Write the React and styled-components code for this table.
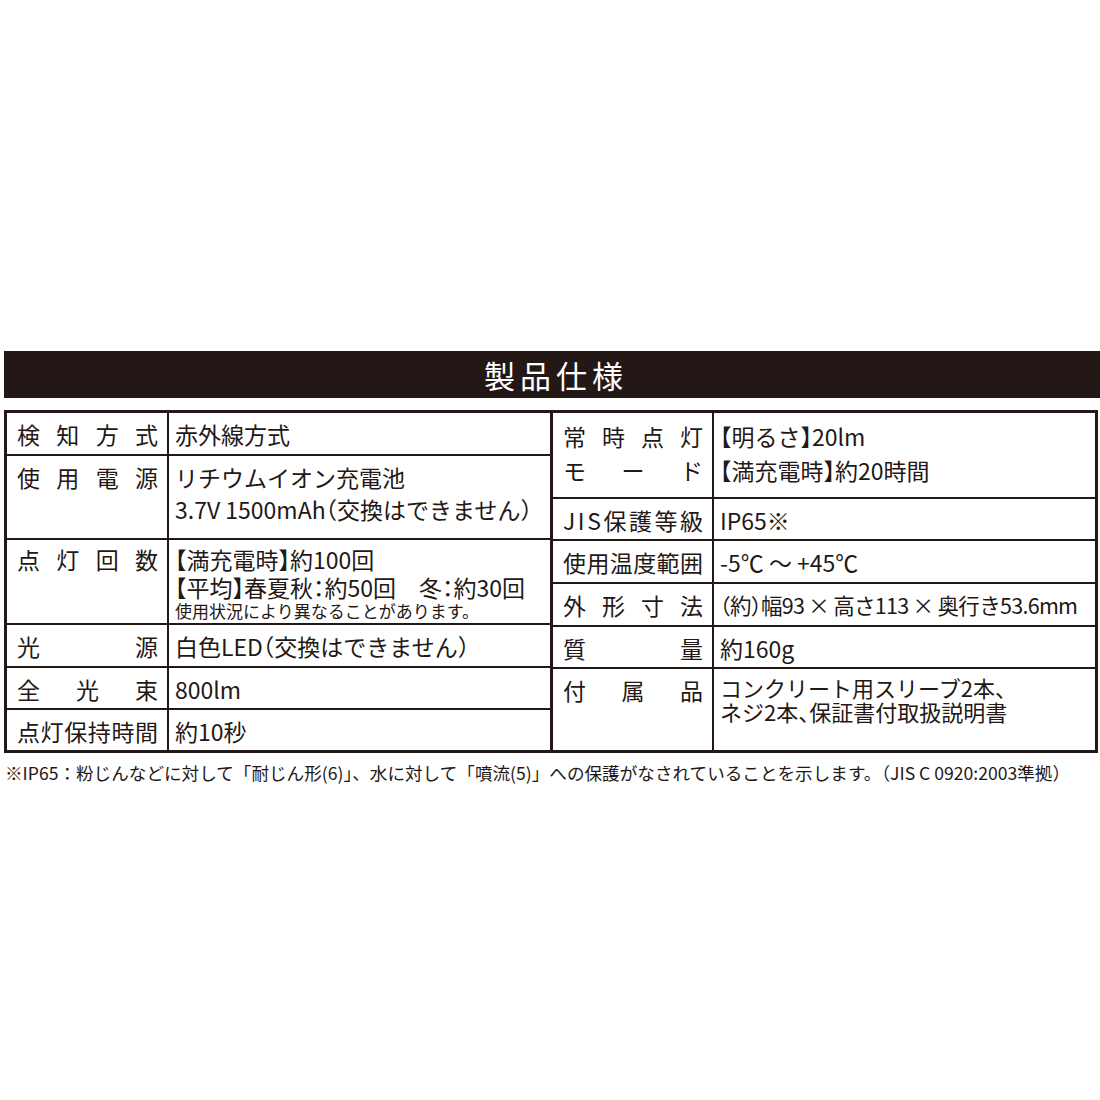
import React from "react";
import styled, { createGlobalStyle } from "styled-components";

const INK = "#231815";

const GlobalStyle = createGlobalStyle`
  html, body {
    margin: 0;
    padding: 0;
    background: #fff;
  }
  body {
    font-family: "Noto Sans CJK JP", "Noto Sans", sans-serif;
    color: ${INK};
  }
`;

// table data: rows with height, label lines and value lines
const leftRows = [
  { h: 43, label: ["検知方式"], value: ["赤外線方式"] },
  {
    h: 84,
    label: ["使用電源"],
    value: ["リチウムイオン充電池", "3.7V 1500mAh（交換はできません）"],
  },
  {
    h: 85,
    lh: 28,
    label: ["点灯回数"],
    value: ["【満充電時】約100回", "【平均】春夏秋：約50回　冬：約30回"],
    note: "使用状況により異なることがあります。",
  },
  { h: 43, label: ["光源"], value: ["白色LED（交換はできません）"] },
  { h: 42, label: ["全光束"], value: ["800lm"] },
  { h: 40, label: ["点灯保持時間"], value: ["約10秒"] },
];

const rightRows = [
  {
    h: 86,
    lh: 34,
    pad: 6,
    label: ["常時点灯", "モード"],
    value: ["【明るさ】20lm", "【満充電時】約20時間"],
  },
  { h: 42, label: ["JIS保護等級"], value: ["IP65※"] },
  { h: 43, label: ["使用温度範囲"], value: ["-5℃ ～ +45℃"] },
  {
    h: 43,
    fs: 21.5,
    tight: true,
    label: ["外形寸法"],
    value: ["（約）幅93 × 高さ113 × 奥行き53.6mm"],
  },
  { h: 42, label: ["質量"], value: ["約160g"] },
  {
    h: 81,
    lh: 24,
    pad: 6,
    fs: 22,
    label: ["付属品"],
    value: ["コンクリート用スリーブ2本、", "ネジ2本、保証書付取扱説明書"],
  },
];

function SpecTable({ rows, labelWidth, side }) {
  return (
    <Table $side={side}>
      {rows.map((row, i) => (
        <Row key={i} $h={row.h} $label={labelWidth}>
          <Label $lh={row.lh === 24 ? undefined : row.lh} $pad={row.lh === 24 ? undefined : row.pad}>
            {row.label.map((line, j) => (
              <LabelLine key={j}>
                {[...line].map((c, k) => (
                  <span key={k}>{c}</span>
                ))}
              </LabelLine>
            ))}
          </Label>
          <Value $lh={row.lh} $pad={row.pad} $fs={row.fs} $tight={row.tight}>
            {row.value.map((line, j) => (
              <div key={j}>{line}</div>
            ))}
            {row.note && <Note>{row.note}</Note>}
          </Value>
        </Row>
      ))}
    </Table>
  );
}

export default function App() {
  return (
    <>
      <GlobalStyle />
      <Page>
        <TitleBar>製品仕様</TitleBar>
        <Tables>
          <SpecTable rows={leftRows} labelWidth={162} side="left" />
          <SpecTable rows={rightRows} labelWidth={161} side="right" />
        </Tables>
        <Footnote>
          ※IP65：粉じんなどに対して「耐じん形(6)」、水に対して「噴流(5)」への保護がなされていることを示します。（JIS C 0920:2003準拠）
        </Footnote>
      </Page>
    </>
  );
}

const Page = styled.div`
  padding-top: 351px;
  width: 1100px;
`;

const TitleBar = styled.div`
  margin-left: 4px;
  height: 47px;
  background: ${INK};
  color: #fff;
  display: flex;
  align-items: center;
  justify-content: center;
  font-size: 31px;
  letter-spacing: 5px;
  padding-left: 8px;
  box-sizing: border-box;
`;

const Tables = styled.div`
  margin: 12px 0 0 4px;
  width: 1094px;
  box-sizing: border-box;
  border: 3px solid ${INK};
  display: flex;
`;

const Table = styled.div`
  display: flex;
  flex-direction: column;
  ${(p) =>
    p.$side === "left"
      ? `width: 546px; border-right: 3px solid ${INK}; box-sizing: border-box;`
      : `flex: 1;`}
`;

const Row = styled.div`
  height: ${(p) => p.$h}px;
  box-sizing: border-box;
  display: grid;
  grid-template-columns: ${(p) => p.$label}px 1fr;
  border-bottom: 2px solid ${INK};
  &:last-child {
    border-bottom: none;
  }
`;

const Label = styled.div`
  box-sizing: border-box;
  border-right: 2px solid ${INK};
  padding: ${(p) => p.$pad ?? 5}px 9px 0 10px;
  font-size: 23px;
  line-height: ${(p) => p.$lh ?? 32}px;
`;

const LabelLine = styled.div`
  display: flex;
  justify-content: space-between;
`;

const Value = styled.div`
  padding: ${(p) => p.$pad ?? 5}px 6px 0 6px;
  font-size: ${(p) => p.$fs ?? 23}px;
  line-height: ${(p) => p.$lh ?? 32}px;
  font-feature-settings: "halt";
  letter-spacing: ${(p) => (p.$tight ? "-0.7px" : "0")};
  white-space: nowrap;
  overflow: hidden;
`;

const Note = styled.div`
  font-size: 17px;
  line-height: 20px;
  font-feature-settings: normal;
`;

const Footnote = styled.div`
  margin: 8px 0 0 5px;
  font-size: 17.6px;
  line-height: 24px;
  white-space: nowrap;
`;
